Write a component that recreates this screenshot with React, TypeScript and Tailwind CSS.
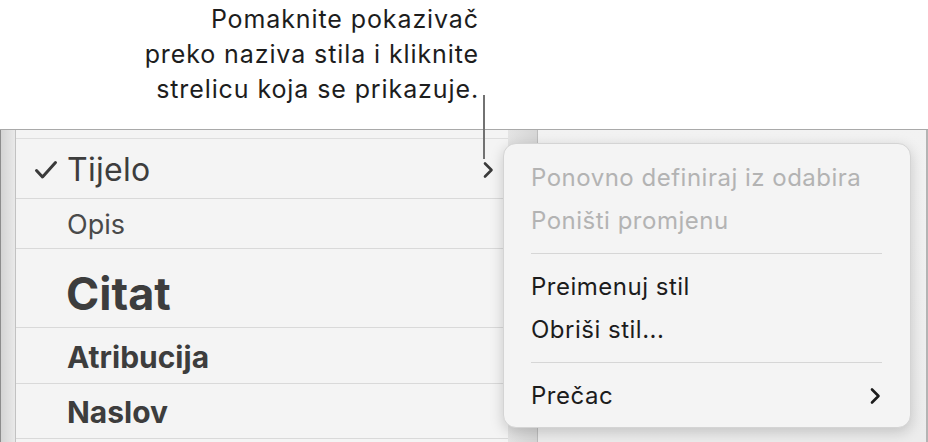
import React from "react";

const font = { fontFamily: "Inter, 'Noto Sans', 'Liberation Sans', sans-serif" };

function Chevron({ className, color }: { className?: string; color: string }) {
  return (
    <svg className={className} width="12" height="18" viewBox="0 0 12 18" fill="none">
      <path d="M3 2.5 L9.5 9 L3 15.5" stroke={color} strokeWidth="2.6" strokeLinecap="round" strokeLinejoin="round" />
    </svg>
  );
}

export default function App() {
  return (
    <div className="relative w-[928px] h-[442px] overflow-hidden bg-white flex flex-col" style={font}>
      {/* caption */}
      <div className="h-[129px] w-[479px] flex flex-col items-end pt-[2px] text-[25px] leading-[35px] text-[#1d1d1d] tracking-[0.9px]">
        <div>Pomaknite pokazivač</div>
        <div>preko naziva stila i kliknite</div>
        <div>strelicu koja se prikazuje.</div>
      </div>

      {/* screenshot area */}
      <div className="flex-1 flex border-t border-[#a9a9a9]">
        {/* left strip */}
        <div className="w-[16px] flex">
          <div className="w-[1px] bg-[#8c8c8c]" />
          <div className="flex-1 bg-gradient-to-r from-[#d4d4d4] to-[#e9e9e9]" />
          <div className="w-[1px] bg-[#c2c2c2]" />
        </div>

        {/* list panel */}
        <div className="w-[492px] bg-[#f4f4f4] flex flex-col text-[#3d3d3d]">
          <div className="h-[9px] border-b border-[#dedede]" />
          <div className="h-[60px] border-b border-[#d9d9d9] flex items-center">
            <svg width="24" height="20" viewBox="0 0 24 20" className="ml-[18px] mt-[3px]" fill="none">
              <path d="M2.5 10.5 L8.5 17 L21.5 2.5" stroke="#3a3a3a" strokeWidth="3" strokeLinecap="round" strokeLinejoin="round" />
            </svg>
            <span className="ml-[9px] text-[32px] leading-none tracking-[0.3px] mt-[2px]">Tijelo</span>
            <Chevron className="ml-auto mr-[14px] mt-[2px]" color="#3a3a3a" />
          </div>
          <div className="h-[50px] border-b border-[#d9d9d9] flex items-center pl-[51px]">
            <span className="text-[27px] leading-none text-[#4a4a4a] mt-[1px]">Opis</span>
          </div>
          <div className="h-[79px] border-b border-[#d9d9d9] flex items-center pl-[50px]">
            <span className="text-[45px] font-bold leading-none mt-[10px]">Citat</span>
          </div>
          <div className="h-[56px] border-b border-[#d9d9d9] flex items-center pl-[51px]">
            <span className="text-[30px] font-bold leading-none mt-[2px]">Atribucija</span>
          </div>
          <div className="h-[55px] border-b border-[#d9d9d9] flex items-center pl-[51px]">
            <span className="text-[30px] font-bold leading-none mt-[1px]">Naslov</span>
          </div>
          <div className="flex-1" />
        </div>

        {/* gray column */}
        <div className="w-[30px] flex">
          <div className="flex-1 bg-gradient-to-r from-[#e4e4e4] to-[#d6d6d6]" />
          <div className="w-[1px] bg-[#bdbdbd]" />
        </div>

        {/* right area */}
        <div className="flex-1 bg-gradient-to-b from-[#f2f2f2] to-[#ececec]" />
        <div className="w-[2px] bg-[#b4b4b4]" />
      </div>

      {/* callout line */}
      <div className="absolute left-[483px] top-[95px] w-[2px] h-[64px] bg-[#727272]" />

      {/* context menu */}
      <div className="absolute left-[503px] top-[143px] w-[408px] h-[285px] rounded-[13px] bg-[#f4f4f4] border border-[#d4d4d4] shadow-[0_4px_14px_rgba(0,0,0,0.18)] flex flex-col px-[27px] pt-[19px] text-[24px] leading-none tracking-[0.5px]">
        <div className="h-[30px] flex items-center text-[#b3b3b3]">Ponovno definiraj iz odabira</div>
        <div className="h-[30px] mt-[13px] flex items-center text-[#b3b3b3]">Poništi promjenu</div>
        <div className="h-[1px] bg-[#d6d6d6] mt-[17px] mr-[1px]" />
        <div className="h-[30px] mt-[18px] flex items-center text-[#1c1c1c]">Preimenuj stil</div>
        <div className="h-[30px] mt-[13px] flex items-center text-[#1c1c1c]">Obriši stil...</div>
        <div className="h-[1px] bg-[#d6d6d6] mt-[17px] mr-[1px]" />
        <div className="h-[30px] mt-[18px] flex items-center text-[#1c1c1c]">
          <span>Prečac</span>
          <Chevron className="ml-auto mr-[2px]" color="#1c1c1c" />
        </div>
      </div>
    </div>
  );
}
